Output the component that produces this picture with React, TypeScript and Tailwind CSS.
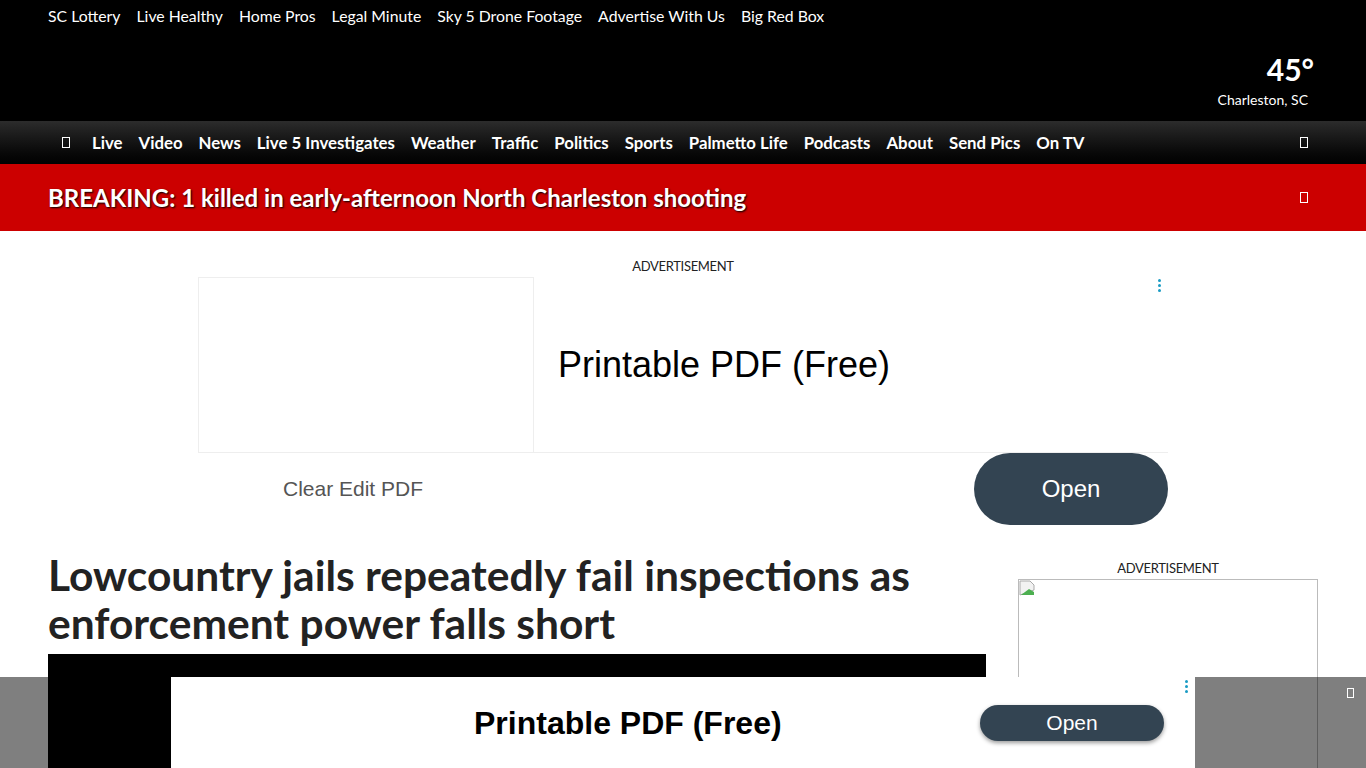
import React from "react";

const topLinks = [
  "SC Lottery",
  "Live Healthy",
  "Home Pros",
  "Legal Minute",
  "Sky 5 Drone Footage",
  "Advertise With Us",
  "Big Red Box",
];

const navLinks = [
  "Live",
  "Video",
  "News",
  "Live 5 Investigates",
  "Weather",
  "Traffic",
  "Politics",
  "Sports",
  "Palmetto Life",
  "Podcasts",
  "About",
  "Send Pics",
  "On TV",
];

// missing-glyph box, like the icon font that failed to load
const Tofu = ({ className = "" }: { className?: string }) => (
  <span className={`inline-block w-[8px] h-[11px] border border-white ${className}`} />
);

const Dots = () => (
  <span className="flex flex-col gap-[2px]">
    <span className="w-[3px] h-[3px] rounded-full bg-[#1a9bc4]" />
    <span className="w-[3px] h-[3px] rounded-full bg-[#1a9bc4]" />
    <span className="w-[3px] h-[3px] rounded-full bg-[#1a9bc4]" />
  </span>
);

const BrokenImage = () => (
  <svg width="16" height="16" viewBox="0 0 16 16">
    <path d="M1 1h10l4 4v5L1 15z" fill="#f2f2f2" stroke="#aaa" />
    <path d="M2 15l8-6 5 3v3z" fill="#4caf50" />
  </svg>
);

export default function App() {
  return (
    <div className="min-h-screen bg-white font-['Lato','Open_Sans',sans-serif]">
      {/* Header */}
      <header className="bg-black h-[121px] px-12 flex flex-col">
        <nav className="flex gap-4 pt-[6px] text-[15.8px] text-white leading-5">
          {topLinks.map((l) => (
            <a key={l}>{l}</a>
          ))}
        </nav>
        <div className="flex-1 flex justify-end items-start pt-[27px] pr-[10px]">
          <div className="flex flex-col items-end text-white">
            <span className="text-[30px] font-bold leading-8 mr-[-6px]">45°</span>
            <span className="text-[14px] leading-5 mt-[5px]">Charleston, SC</span>
          </div>
        </div>
      </header>

      {/* Main nav */}
      <nav className="h-[43px] bg-gradient-to-b from-[#2c2c2c] to-[#020202] flex items-center pl-[62px] pr-[58px]">
        <Tofu className="mr-[22px]" />
        <div className="flex gap-4 text-white font-bold text-[16.8px]">
          {navLinks.map((l) => (
            <a key={l}>{l}</a>
          ))}
        </div>
        <Tofu className="ml-auto" />
      </nav>

      {/* Breaking */}
      <div className="h-[67px] bg-[#cc0000] flex items-center px-12">
        <span className="text-white font-bold text-[24px] [text-shadow:1px_1px_2px_#000]">
          BREAKING: 1 killed in early-afternoon North Charleston shooting
        </span>
        <Tofu className="ml-auto mr-[10px] h-[10px] w-[7px]" />
      </div>

      {/* Top ad */}
      <section className="pt-[27px] flex flex-col items-center">
        <p className="text-[13px] text-[#222] leading-4 tracking-tight">ADVERTISEMENT</p>
        <div className="w-[970px] mt-[3px] font-['Liberation_Sans',Arial,sans-serif]">
          <div className="flex h-[176px] border-b border-[#eee]">
            <div className="w-[336px] border border-[#eee] border-b-0" />
            <div className="flex-1 relative flex items-center pl-[24px]">
              <span className="text-[36px] text-black">Printable PDF (Free)</span>
              <span className="absolute right-[7px] top-[2px]">
                <Dots />
              </span>
            </div>
          </div>
          <div className="flex items-center h-[73px] -mt-px">
            <span className="text-[21px] text-[#555] pl-[85px]">Clear Edit PDF</span>
            <button className="ml-auto w-[194px] h-[72px] rounded-full bg-[#334452] text-white text-[24px]">
              Open
            </button>
          </div>
        </div>
      </section>

      {/* Article + sidebar */}
      <main className="flex px-12 pt-[26px] gap-8">
        <div className="w-[938px]">
          <h1 className="text-[42.5px] font-bold leading-[48px] text-[#222]">
            Lowcountry jails repeatedly fail inspections as enforcement power falls short
          </h1>
          <div className="mt-[7px] h-[300px] bg-black" />
        </div>
        <aside className="w-[300px] flex flex-col items-center pt-[9px]">
          <p className="text-[13px] text-[#222] leading-4 tracking-tight">ADVERTISEMENT</p>
          <div className="w-[300px] h-[250px] border border-[#bbb] mt-[3px]">
            <BrokenImage />
          </div>
        </aside>
      </main>

      {/* Sticky bottom ad */}
      <div className="fixed left-0 right-0 bottom-0 h-[91px] bg-black/50 flex justify-center">
        <div className="w-[1024px] bg-white flex items-center relative font-['Liberation_Sans',Arial,sans-serif]">
          <span className="text-[32px] font-bold text-black pl-[303px]">Printable PDF (Free)</span>
          <button className="ml-auto mr-[31px] w-[184px] h-[36px] rounded-full bg-[#334452] text-white text-[21px] shadow-[0_2px_4px_rgba(0,0,0,0.4)]">
            Open
          </button>
          <span className="absolute right-[7px] top-[3px]">
            <Dots />
          </span>
        </div>
        <span className="absolute right-[12px] top-[11px] w-[7px] h-[10px] border border-white" />
      </div>
    </div>
  );
}
